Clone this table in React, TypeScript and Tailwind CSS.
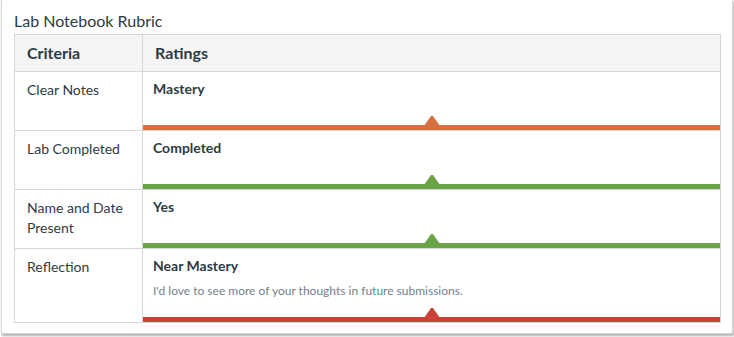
type Rating = {
  criterion: string
  rating: string
  comment?: string
  color: string
}

const rows: Rating[] = [
  { criterion: 'Clear Notes', rating: 'Mastery', color: 'bg-[#d6703f]' },
  { criterion: 'Lab Completed', rating: 'Completed', color: 'bg-[#6aa446]' },
  { criterion: 'Name and Date Present', rating: 'Yes', color: 'bg-[#6aa446]' },
  {
    criterion: 'Reflection',
    rating: 'Near Mastery',
    comment: "I'd love to see more of your thoughts in future submissions.",
    color: 'bg-[#c9423a]',
  },
]

const arrowFill: Record<string, string> = {
  'bg-[#d6703f]': '#d6703f',
  'bg-[#6aa446]': '#6aa446',
  'bg-[#c9423a]': '#c9423a',
}

function RatingBar({ color }: { color: string }) {
  return (
    <div className={`relative h-[5px] w-full ${color}`}>
      <svg
        width="16"
        height="11"
        viewBox="0 0 16 11"
        className="absolute left-1/2 -top-[10px] -translate-x-1/2"
      >
        <polygon points="0,11 7,1 9,1 16,11" fill={arrowFill[color]} />
      </svg>
    </div>
  )
}

function RubricRow({ row, last }: { row: Rating; last: boolean }) {
  return (
    <div
      className={`flex ${last ? 'h-[73px]' : 'h-[59px] border-b border-[#d3d7da]'}`}
    >
      <div className="w-[128px] shrink-0 border-r border-[#d3d7da] px-3 pt-2 text-[14px] leading-5 text-[#2d3b45]">
        {row.criterion}
      </div>
      <div className="flex flex-1 flex-col">
        <div className="flex-1 px-[10px] pt-[7px]">
          <div className="text-[14px] font-bold leading-5 text-[#2d3b45]">
            {row.rating}
          </div>
          {row.comment && (
            <div className="mt-[6px] text-[12px] leading-[18px] text-[#73818c]">
              {row.comment}
            </div>
          )}
        </div>
        <RatingBar color={row.color} />
      </div>
    </div>
  )
}

export default function App() {
  return (
    <div className="h-[337px] w-[734px] bg-white font-['Lato',sans-serif]">
      <div className="ml-[1px] h-[334px] w-[732px] border border-t-0 border-[#d5d5d5] px-3 pt-[9px] shadow-[1px_2px_2px_rgba(0,0,0,0.3)]">
        <h2 className="mb-[1px] text-[16px] leading-6 text-[#2d3b45]">
          Lab Notebook Rubric
        </h2>
        <div className="w-[707px] border border-[#d3d7da]">
          <div className="flex h-[37px] border-b border-[#d3d7da] bg-[#f5f5f5] text-[16px] font-bold text-[#2d3b45]">
            <div className="flex w-[128px] shrink-0 items-center border-r border-[#d3d7da] px-3">
              Criteria
            </div>
            <div className="flex items-center px-3">Ratings</div>
          </div>
          {rows.map((row, i) => (
            <RubricRow key={row.criterion} row={row} last={i === rows.length - 1} />
          ))}
        </div>
      </div>
    </div>
  )
}
